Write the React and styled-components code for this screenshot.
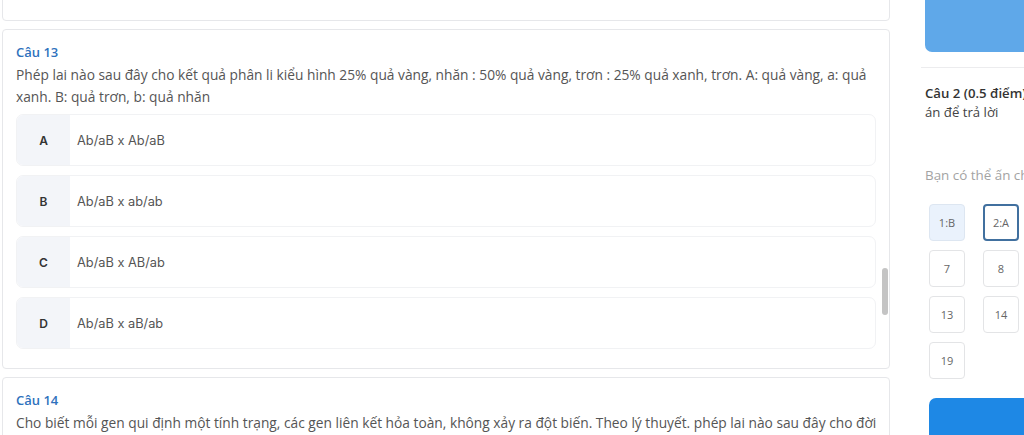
import React from "react";
import styled, { createGlobalStyle } from "styled-components";

const GlobalStyle = createGlobalStyle`
  html, body {
    margin: 0;
    padding: 0;
    background: #ffffff;
    overflow: hidden;
  }
  body {
    font-family: "Open Sans", "Noto Sans", sans-serif;
    color: #555;
  }
`;

const Page = styled.div`
  position: relative;
  display: flex;
  gap: 31px;
  width: 1024px;
  height: 435px;
  overflow: hidden;
  padding-left: 2px;
  box-sizing: border-box;
`;

const Questions = styled.div`
  display: flex;
  flex-direction: column;
  gap: 8px;
  width: 888px;
  flex-shrink: 0;
`;

const Card = styled.div`
  border: 1px solid #e6e7ea;
  border-radius: 4px;
  background: #fff;
  padding: 12px 13px 19px;
  box-sizing: border-box;
  flex-shrink: 0;
`;

const TopCard = styled(Card)`
  margin-top: -20px;
  height: 41px;
`;

const Title = styled.div`
  font-size: 13px;
  line-height: 20px;
  font-weight: 600;
  color: #2f72bd;
`;

const Question = styled.p`
  margin: 2px -6px 0 0;
  font-size: 13.75px;
  line-height: 22px;
  color: #555;
`;

const Options = styled.div`
  display: flex;
  flex-direction: column;
  gap: 9px;
  margin-top: 6px;
`;

const Option = styled.div`
  display: flex;
  height: 52px;
  border: 1px solid #f1f2f4;
  border-radius: 7px;
  overflow: hidden;
  box-sizing: border-box;
`;

const Letter = styled.div`
  width: 53px;
  display: flex;
  align-items: center;
  justify-content: center;
  background: #f3f5f9;
  font-family: Inter, "Open Sans", sans-serif;
  font-size: 12px;
  font-weight: 600;
  color: #333;
`;

const OptionText = styled.div`
  display: flex;
  align-items: center;
  padding-left: 7px;
  font-family: Inter, "Open Sans", sans-serif;
  font-size: 12.8px;
  color: #555;
`;

const Thumb = styled.div`
  position: absolute;
  left: 882px;
  top: 268px;
  width: 6px;
  height: 47px;
  border-radius: 3px;
  background: #c4c4c4;
`;

const Side = styled.div`
  width: 260px;
  flex-shrink: 0;
  display: flex;
  flex-direction: column;
`;

const SideTop = styled.div`
  padding: 0 0 15px 4px;
  border-bottom: 1px solid #ececee;
`;

const TopButton = styled.div`
  margin-top: -10px;
  height: 62px;
  border-radius: 7px;
  background: #5fa8e9;
`;

const SideBody = styled.div`
  padding: 16px 0 0 4px;
  white-space: nowrap;
`;

const Line = styled.div`
  font-size: 13.2px;
  line-height: 19px;
  color: #444;

  b {
    font-weight: 600;
    color: #333;
  }
`;

const Hint = styled.div`
  margin-top: 44px;
  font-size: 13.4px;
  line-height: 19px;
  color: #a3a3a3;
`;

const Grid = styled.div`
  display: grid;
  grid-template-columns: repeat(4, 36px);
  grid-auto-rows: 37px;
  column-gap: 18px;
  row-gap: 9px;
  margin-top: 19px;
  padding-left: 4px;
`;

const Cell = styled.div`
  display: flex;
  align-items: center;
  justify-content: center;
  border-radius: 4px;
  box-sizing: border-box;
  font-size: 11px;
  color: #666;
  background: ${(p) => (p.answered ? "#eaf2fc" : "#fff")};
  border: ${(p) =>
    p.active
      ? "2px solid #41709f"
      : p.answered
      ? "1px solid #dde6f1"
      : "1px solid #e3e4e6"};
`;

const BottomButton = styled.div`
  margin: 19px 0 0 4px;
  height: 60px;
  border-radius: 7px;
  background: #1e88e5;
`;

const options = [
  { key: "A", text: "Ab/aB x Ab/aB" },
  { key: "B", text: "Ab/aB x ab/ab" },
  { key: "C", text: "Ab/aB x AB/ab" },
  { key: "D", text: "Ab/aB x aB/ab" },
];

const cells = [
  { label: "1:B", answered: true },
  { label: "2:A", active: true },
  null,
  null,
  { label: "7" },
  { label: "8" },
  null,
  null,
  { label: "13" },
  { label: "14" },
  null,
  null,
  { label: "19" },
];

export default function App() {
  return (
    <>
      <GlobalStyle />
      <Page>
        <Questions>
          <TopCard />
          <Card>
            <Title>Câu 13</Title>
            <Question>
              Phép lai nào sau đây cho kết quả phân li kiểu hình 25% quả vàng,
              nhăn : 50% quả vàng, trơn : 25% quả xanh, trơn. A: quả vàng, a:
              quả xanh. B: quả trơn, b: quả nhăn
            </Question>
            <Options>
              {options.map((o) => (
                <Option key={o.key}>
                  <Letter>{o.key}</Letter>
                  <OptionText>{o.text}</OptionText>
                </Option>
              ))}
            </Options>
          </Card>
          <Card>
            <Title>Câu 14</Title>
            <Question>
              Cho biết mỗi gen qui định một tính trạng, các gen liên kết hỏa
              toàn, không xảy ra đột biến. Theo lý thuyết. phép lai nào sau đây
              cho đời con có tỉ lệ kiểu hình 1 : 2 : 1?
            </Question>
          </Card>
        </Questions>
        <Thumb />
        <Side>
          <SideTop>
            <TopButton />
          </SideTop>
          <SideBody>
            <Line>
              <b>Câu 2 (0.5 điểm)</b> Chọn phương
            </Line>
            <Line>án để trả lời</Line>
            <Hint>Bạn có thể ấn chọn câu hỏi để chuyển nhanh</Hint>
            <Grid>
              {cells.map((c, i) =>
                c ? (
                  <Cell key={i} answered={c.answered} active={c.active}>
                    {c.label}
                  </Cell>
                ) : (
                  <span key={i} />
                )
              )}
            </Grid>
            <BottomButton />
          </SideBody>
        </Side>
      </Page>
    </>
  );
}
